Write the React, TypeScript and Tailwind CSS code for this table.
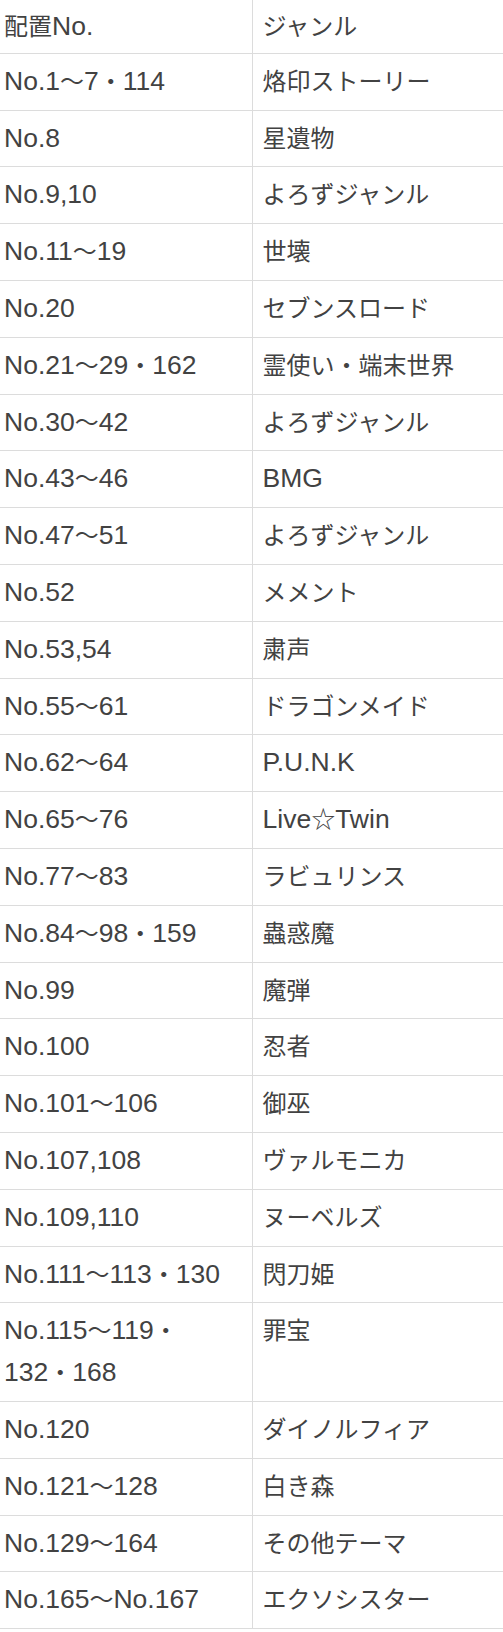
const rows: [string, string][] = [
  ['No.1～7・114', '烙印ストーリー'],
  ['No.8', '星遺物'],
  ['No.9,10', 'よろずジャンル'],
  ['No.11～19', '世壊'],
  ['No.20', 'セブンスロード'],
  ['No.21～29・162', '霊使い・端末世界'],
  ['No.30～42', 'よろずジャンル'],
  ['No.43～46', 'BMG'],
  ['No.47～51', 'よろずジャンル'],
  ['No.52', 'メメント'],
  ['No.53,54', '粛声'],
  ['No.55～61', 'ドラゴンメイド'],
  ['No.62～64', 'P.U.N.K'],
  ['No.65～76', 'Live☆Twin'],
  ['No.77～83', 'ラビュリンス'],
  ['No.84～98・159', '蟲惑魔'],
  ['No.99', '魔弾'],
  ['No.100', '忍者'],
  ['No.101～106', '御巫'],
  ['No.107,108', 'ヴァルモニカ'],
  ['No.109,110', 'ヌーベルズ'],
  ['No.111～113・130', '閃刀姫'],
  ['No.115～119・\n132・168', '罪宝'],
  ['No.120', 'ダイノルフィア'],
  ['No.121～128', '白き森'],
  ['No.129～164', 'その他テーマ'],
  ['No.165～No.167', 'エクソシスター'],
];

const CJK = /[\u3000-\u9fff\uff00-\uffef☆]/;

// latin runs are set a bit larger than kana/kanji, like the original font does
function Mixed({ text }: { text: string }) {
  const parts = text.split(/([\u3000-\u9fff\uff00-\uffef☆]+)/).filter(Boolean);
  return (
    <>
      {parts.map((p, i) =>
        CJK.test(p) ? (
          <span key={i} className="text-[24px] leading-none">{p}</span>
        ) : (
          <span key={i} className="text-[26.5px] leading-none">{p}</span>
        )
      )}
    </>
  );
}

function Cell({ text }: { text: string }) {
  return (
    <>
      {text.split('\n').map((l, i) => (
        <span key={i} className="block h-[41.8px] whitespace-nowrap">
          <Mixed text={l} />
        </span>
      ))}
    </>
  );
}

export default function App() {
  return (
    <div
      className="min-h-screen bg-white text-[#424242] text-[24px] leading-[41.8px]"
      style={{ fontFamily: '"Liberation Sans", "Noto Sans CJK JP", sans-serif' }}
    >
      <table className="w-full border-collapse table-fixed">
        <thead>
          <tr className="border-b border-[#dcdcdc]">
            <th className="w-[252px] text-left font-normal align-top pl-[4px] pr-2 pt-[6px] pb-[5px] border-r border-[#dcdcdc]">
              <Cell text="配置No." />
            </th>
            <th className="text-left font-normal align-top pl-[10px] pt-[6px] pb-[5px]">
              <Cell text="ジャンル" />
            </th>
          </tr>
        </thead>
        <tbody>
          {rows.map(([no, genre]) => (
            <tr key={no} className="border-b border-[#dcdcdc]">
              <td className="align-top pl-[4px] pr-2 pt-[7px] pb-[7px] border-r border-[#dcdcdc]">
                <Cell text={no} />
              </td>
              <td className="align-top pl-[10px] pt-[7px] pb-[7px]">
                <Cell text={genre} />
              </td>
            </tr>
          ))}
        </tbody>
      </table>
    </div>
  );
}
